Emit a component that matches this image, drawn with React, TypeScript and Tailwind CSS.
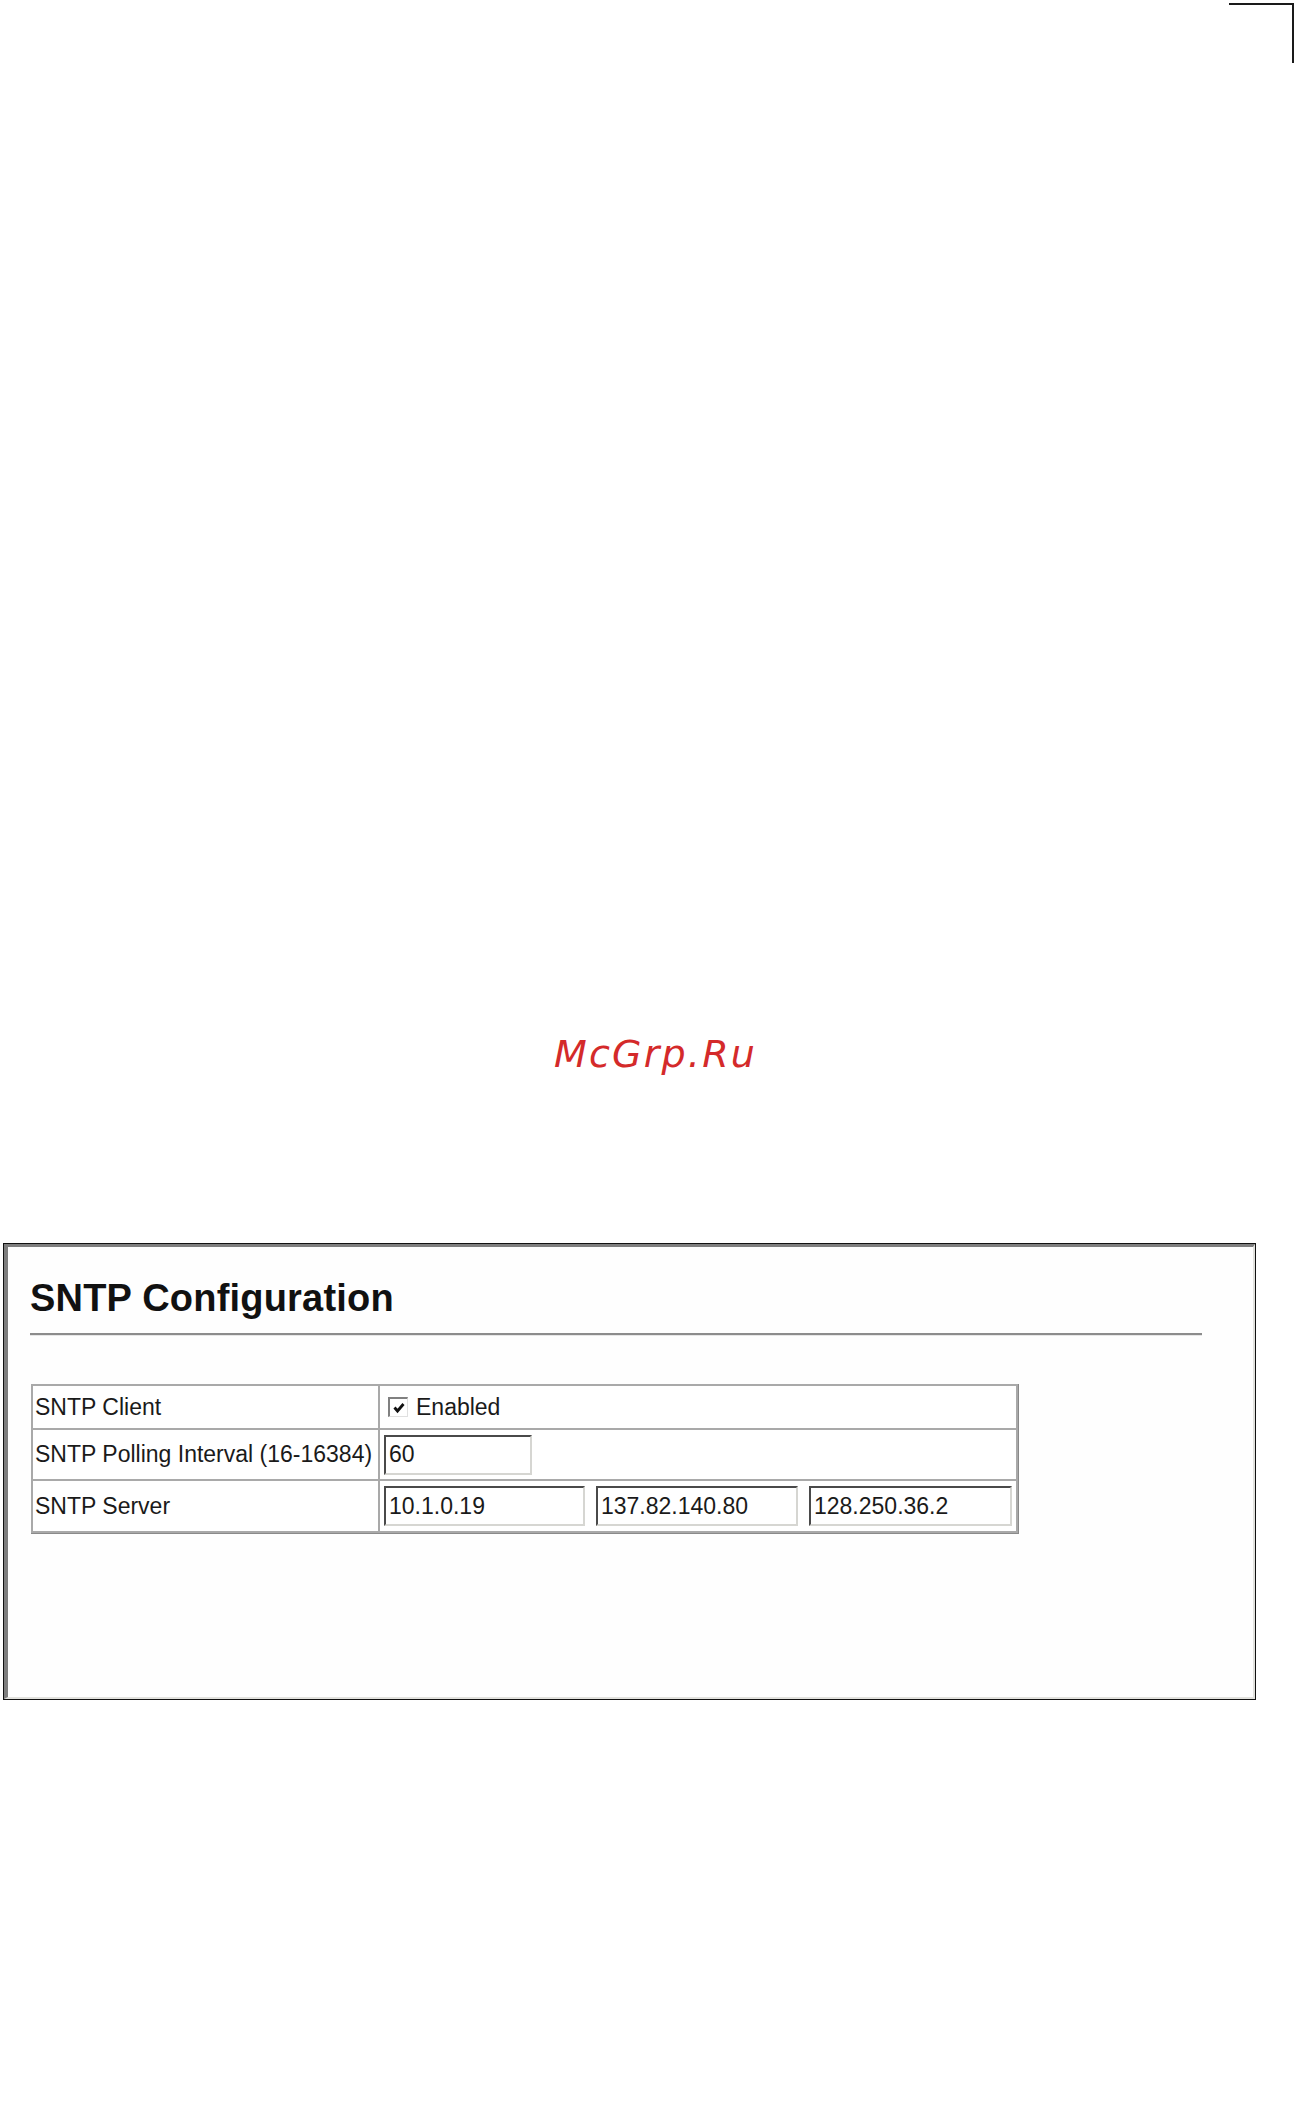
import React from "react";

function Input({ value, w }: { value: string; w: string }) {
  return (
    <div
      className={`${w} h-[40px] flex items-center border-t-[2px] border-l-[2px] border-b-[2px] border-r-[2px] border-t-[#4a4a4a] border-l-[#4a4a4a] border-b-[#d6d6d2] border-r-[#d6d6d2] bg-white pl-[3px] text-[23px] leading-none text-[#1a1a1a]`}
    >
      {value}
    </div>
  );
}

export default function App() {
  return (
    <div className="w-[1296px] h-[2107px] bg-white font-['Liberation_Sans',Arial,sans-serif]">
      <div className="flex justify-end pt-[3px] pr-[2px]">
        <div className="w-[65px] h-[60px] border-t-2 border-r-2 border-[#1a1a1a]" />
      </div>

      <div className="mt-[972px] pl-[554px] h-[38px] text-[38px] leading-none italic tracking-[2.2px] text-[#d42a2a] font-['DejaVu_Sans',Verdana,sans-serif]">
        McGrp.Ru
      </div>

      <div className="mt-[170px] ml-[3px] w-[1253px] h-[457px] border border-[#111]">
        <div className="w-full h-full border-l-[4px] border-t-[3px] border-r-[2px] border-b-[2px] border-l-[#7e7e7e] border-t-[#7e7e7e] border-r-[#e2e2de] border-b-[#e2e2de] bg-[#fefefe] pl-[22px] pt-[32px]">
          <h1 className="text-[38px] leading-none font-bold text-[#111] tracking-[0.2px]">
            SNTP Configuration
          </h1>
          <div className="mt-[16px] w-[1172px] border-t-[2px] border-[#8c8c8c] border-b border-b-[#e6e6e6]" />

          <div className="mt-[48px] ml-[1px] w-[988px] grid grid-cols-[345px_1fr] grid-rows-[42px_49px_50px] gap-[2px] p-[2px] bg-[#a9a9a9] border-r border-b border-[#8a8a8a] text-[23px] leading-none text-[#1a1a1a]">
            <div className="bg-white flex items-center pl-[2px]">SNTP Client</div>
            <div className="bg-white flex items-center pl-[8px] gap-[8px]">
              <div className="w-[20px] h-[20px] border-t-[2px] border-l-[2px] border-b border-r border-t-[#808080] border-l-[#808080] border-b-[#e0e0e0] border-r-[#e0e0e0] bg-white flex items-center justify-center">
                <svg width="14" height="14" viewBox="0 0 14 14">
                  <path d="M2.5 6.5 L5.5 10 L11.5 3" fill="none" stroke="#111" strokeWidth="2.8" />
                </svg>
              </div>
              <span>Enabled</span>
            </div>

            <div className="bg-white flex items-center pl-[2px] whitespace-nowrap">SNTP Polling Interval (16-16384)</div>
            <div className="bg-white flex items-center pl-[4px]">
              <Input value="60" w="w-[148px]" />
            </div>

            <div className="bg-white flex items-center pl-[2px]">SNTP Server</div>
            <div className="bg-white flex items-center pl-[4px] gap-[11px]">
              <Input value="10.1.0.19" w="w-[201px]" />
              <Input value="137.82.140.80" w="w-[202px]" />
              <Input value="128.250.36.2" w="w-[203px]" />
            </div>
          </div>
        </div>
      </div>
    </div>
  );
}
